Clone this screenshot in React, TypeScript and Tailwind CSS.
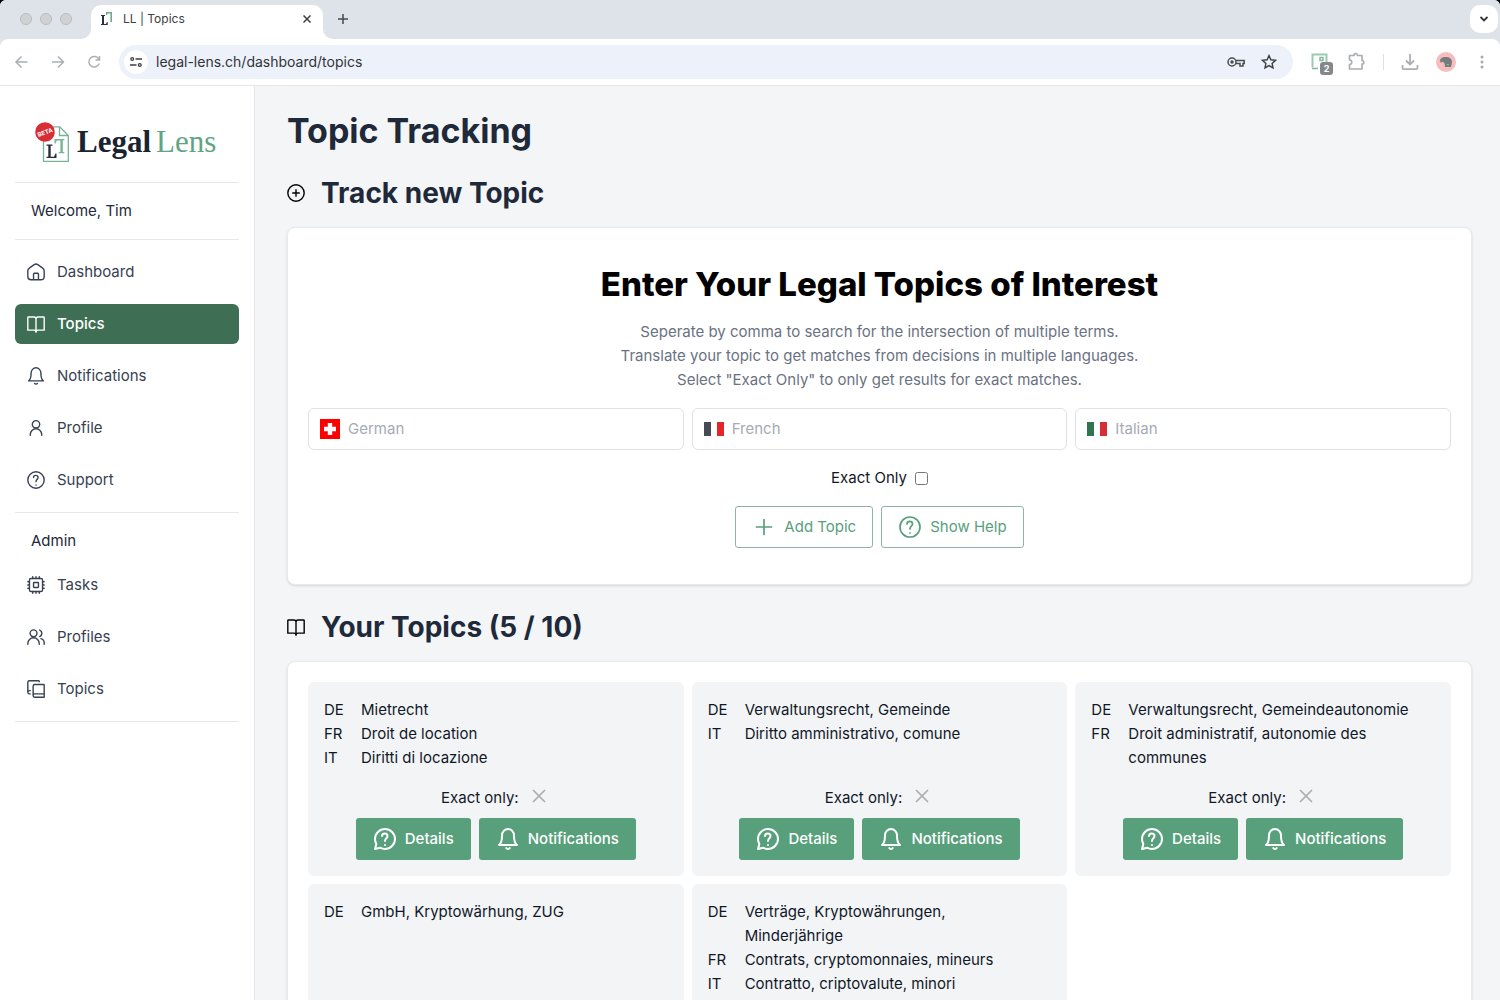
import type { ReactNode } from 'react'

type IconProps = { className?: string; viewBox?: string }

function LineIcon({
  className = 'size-[18px]',
  viewBox = '1 1 22 22',
  children,
}: IconProps & { children: ReactNode }) {
  return (
    <svg
      className={`shrink-0 ${className}`}
      viewBox={viewBox}
      fill="none"
      stroke="currentColor"
      strokeWidth="1.7"
      strokeLinecap="round"
      strokeLinejoin="round"
      aria-hidden="true"
    >
      {children}
    </svg>
  )
}

function IconHome() {
  return (
    <LineIcon>
      <path d="M9 21.500H6a4 4 0 0 1-4-4v-7a4 4 0 0 1 1.800-3.300l6-4.200a4 4 0 0 1 4.400 0l6 4.200a4 4 0 0 1 1.800 3.300v7a4 4 0 0 1-4 4h-3M9 21.500v-7a1 1 0 0 1 1-1h4a1 1 0 0 1 1 1v7M9 21.500h6" />
    </LineIcon>
  )
}

function IconBook() {
  return (
    <LineIcon>
      <path d="M12 22V6a2.500 2.500 0 0 1 2.500-2.500h6.900a.6.6 0 0 1 .6.6V19.500h-7.500A2.500 2.500 0 0 0 12 22M12 22V6a2.500 2.500 0 0 0-2.500-2.500H2.600a.6.6 0 0 0-.6.6V19.500h7.500A2.500 2.500 0 0 1 12 22" />
    </LineIcon>
  )
}

function IconBell({ className, viewBox }: IconProps) {
  return (
    <LineIcon className={className} viewBox={viewBox}>
      <path d="M18 8.400C18 6.703 17.368 5.075 16.243 3.875 15.117 2.674 13.591 2 12 2s-3.117.674-4.243 1.875C6.632 5.075 6 6.703 6 8.400 6 15.867 3 18 3 18h18s-3-2.133-3-9.600Z" />
      <path d="M13.730 21a2 2 0 0 1-3.460 0" />
    </LineIcon>
  )
}

function IconUser() {
  return (
    <LineIcon>
      <path d="M5 21v-1a7 7 0 0 1 14 0v1" />
      <circle cx="12" cy="7.500" r="4.500" />
    </LineIcon>
  )
}

function IconHelp({ className, viewBox }: IconProps) {
  return (
    <LineIcon className={className} viewBox={viewBox}>
      <circle cx="12" cy="12" r="10" />
      <path d="M9 9c0-3.500 5.500-3.500 5.500 0 0 2.500-2.500 2-2.500 5M12 18.010l.01-.011" />
    </LineIcon>
  )
}

function IconCpu() {
  return (
    <LineIcon>
      <rect x="4" y="4" width="16" height="16" rx="2" />
      <rect x="9" y="9" width="6" height="6" rx="0.5" />
      <path d="M8 4V2M12 4V2M16 4V2M8 22v-2M12 22v-2M16 22v-2M4 8H2M4 12H2M4 16H2M22 8h-2M22 12h-2M22 16h-2" />
    </LineIcon>
  )
}

function IconUsers() {
  return (
    <LineIcon>
      <path d="M2 21v-1a7 7 0 0 1 14 0v1M18 14a5.500 5.500 0 0 1 4 5.500V21" />
      <circle cx="9" cy="7.500" r="4.200" />
      <path d="M16.500 3.500a4.300 4.300 0 0 1 0 8" />
    </LineIcon>
  )
}

function IconBooks() {
  return (
    <LineIcon>
      <path d="M5 18H4a2 2 0 0 1-2-2V4a2 2 0 0 1 2-2h11.400a.6.6 0 0 1 .6.6V3M2 15.500A2 2 0 0 1 4 14h1" />
      <path d="M8.500 20V8.500a2 2 0 0 1 2-2h10.900a.6.6 0 0 1 .6.6V18H10.500a2 2 0 0 0 0 4H22v-4" />
    </LineIcon>
  )
}

function IconPlusCircle() {
  return (
    <LineIcon>
      <circle cx="12" cy="12" r="10" />
      <path d="M8 12h8M12 8v8" />
    </LineIcon>
  )
}

function IconChatQuestion() {
  return (
    <LineIcon className="size-6 stroke-2" viewBox="0 0 24 24">
      <path d="M12 22C17.523 22 22 17.523 22 12S17.523 2 12 2 2 6.477 2 12c0 1.821.487 3.529 1.338 5L2 22l5-1.338C8.471 21.513 10.179 22 12 22Z" />
      <path d="M9 9c0-3.500 5.500-3.500 5.500 0 0 2.500-2.500 2-2.500 5M12 18.010l.01-.011" />
    </LineIcon>
  )
}

function Favicon() {
  return (
    <svg className="size-4 shrink-0" viewBox="0 0 16 16" aria-hidden="true">
      <path d="M2 4h4v1H5v8h2l1-2h.7v3H2v-1h1V5H2z" fill="#27303c" />
      <path d="M7 1h6v10h-1.600V2.400H8.500L8 4H7z" fill="#6bab8c" />
    </svg>
  )
}

function TabStrip() {
  return (
    <div className="flex h-[39px] shrink-0 items-center bg-[#dee2e9] pb-px pl-5">
      <div className="flex gap-2">
        {['close', 'minimize', 'zoom'].map((name) => (
          <button
            key={name}
            type="button"
            aria-label={name}
            className="size-3 rounded-full border border-[#b9bcbe] bg-[#cfd1d3]"
          />
        ))}
      </div>
      <div className="relative -mb-px ml-[19px] flex h-[34px] w-[232px] items-center gap-2 self-end rounded-t-[10px] bg-white px-2 pb-1.5 text-[#3c4043]">
        <svg className="absolute bottom-0 right-full size-2.5" viewBox="0 0 10 10" aria-hidden="true">
          <path d="M10 0v10H0A10 10 0 0 0 10 0Z" fill="#fff" />
        </svg>
        <svg className="absolute bottom-0 left-full size-2.5" viewBox="0 0 10 10" aria-hidden="true">
          <path d="M0 0v10h10A10 10 0 0 1 0 0Z" fill="#fff" />
        </svg>
        <Favicon />
        <span className="flex-1 text-xs">LL | Topics</span>
        <button type="button" aria-label="Close tab" className="flex size-4 items-center justify-center">
          <svg className="size-2" viewBox="0 0 8 8" stroke="#3c4043" strokeWidth="1.500" aria-hidden="true">
            <path d="M.5.5l7 7M7.500.5l-7 7" />
          </svg>
        </button>
      </div>
      <button type="button" aria-label="New tab" className="ml-3 flex size-4 items-center justify-center">
        <svg className="size-2.5" viewBox="0 0 10 10" stroke="#45494d" strokeWidth="1.500" aria-hidden="true">
          <path d="M5 0v10M0 5h10" />
        </svg>
      </button>
      <button
        type="button"
        aria-label="Search tabs"
        className="ml-auto mr-0.5 flex size-7 items-center justify-center rounded-[10px] bg-white"
      >
        <svg className="h-1.5 w-2" viewBox="0 0 8 6" fill="none" stroke="#303438" strokeWidth="1.800" aria-hidden="true">
          <path d="M.5 1L4 4.500 7.500 1" />
        </svg>
      </button>
    </div>
  )
}

function Toolbar() {
  return (
    <div className="bg-[#dee2e9]">
      <div className="flex h-[47px] items-center rounded-t-[8px] border-b border-[#e4e6e9] bg-white px-3 text-[#abafb3]">
        <div className="flex items-center gap-4">
          <button type="button" aria-label="Back" className="size-5">
            <svg viewBox="0 0 20 20" fill="none" stroke="currentColor" strokeWidth="1.500" aria-hidden="true">
              <path d="M15.500 10H4M9.500 4.500L4 10l5.500 5.500" />
            </svg>
          </button>
          <button type="button" aria-label="Forward" className="size-5">
            <svg viewBox="0 0 20 20" fill="none" stroke="currentColor" strokeWidth="1.500" aria-hidden="true">
              <path d="M4 10h11.500M10 4.500l5.500 5.500-5.500 5.500" />
            </svg>
          </button>
          <button type="button" aria-label="Reload" className="size-5">
            <svg viewBox="0 0 20 20" fill="none" stroke="currentColor" strokeWidth="1.500" aria-hidden="true">
              <path d="M15 7.500A5.300 5.300 0 1 0 15.200 11.500M15.500 4v4h-4" />
            </svg>
          </button>
        </div>
        <div className="ml-[15px] flex h-[34px] flex-1 items-center rounded-full bg-[#edf1fa] pl-[5px] pr-4">
          <span className="flex size-6 items-center justify-center rounded-full bg-white">
            <svg className="size-3" viewBox="0 0 12 12" fill="none" stroke="#3c4043" strokeWidth="1.300" aria-hidden="true">
              <circle cx="2.200" cy="3" r="1.400" />
              <path d="M5.500 3H12M0 9h6.500" />
              <circle cx="9.800" cy="9" r="1.400" />
            </svg>
          </span>
          <input
            aria-label="Address"
            defaultValue="legal-lens.ch/dashboard/topics"
            className="ml-2 min-w-0 flex-1 bg-transparent text-sm text-[#303438] outline-none"
          />
          <svg className="h-3 w-[18px]" viewBox="0 0 18 12" fill="none" stroke="#4a4d51" strokeWidth="1.500" aria-hidden="true">
            <circle cx="5" cy="6" r="4" />
            <circle cx="5" cy="6" r="1" fill="#4a4d51" />
            <path d="M8.800 4.500h8.400v3h-1.200v2.500h-3V7.500H8.800" />
          </svg>
          <svg className="ml-4 size-4" viewBox="0 0 16 16" fill="none" stroke="#3c4043" strokeWidth="1.400" aria-hidden="true">
            <path d="M8 1.600l1.900 4.200 4.600.5-3.400 3.100.9 4.500-4-2.300-4 2.300.9-4.500L1.500 6.300l4.600-.5z" />
          </svg>
        </div>
        <div className="ml-[18px] flex items-center">
          <span className="relative block size-5">
            <svg className="size-5" viewBox="0 0 20 20" aria-hidden="true">
              <path d="M1.500 15.500V2.500h14v8" fill="none" stroke="#9cc9b3" strokeWidth="2" />
              <path d="M1 16.500h6M9 5.500h3v3h-3z" stroke="#84b99d" fill="none" strokeWidth="1.500" />
            </svg>
            <span className="absolute left-[9px] top-[10px] flex size-[13px] items-center justify-center rounded-[3px] bg-[#84888c] text-[9px] font-bold text-white">
              2
            </span>
          </span>
          <svg className="ml-4 size-5" viewBox="0 0 20 20" fill="none" stroke="currentColor" strokeWidth="1.700" aria-hidden="true">
            <path d="M2.500 3.500H7a1.800 1.800 0 0 1 3.600 0H15v5a1.800 1.800 0 0 1 0 3.600v4.900H2.500v-4.500a2.200 2.200 0 0 0 0-4.500z" strokeLinejoin="round" />
          </svg>
          <span className="ml-4 h-4 w-px bg-[#dcdfe3]" />
          <svg className="ml-[17px] size-[18px]" viewBox="0 0 18 18" fill="none" stroke="currentColor" strokeWidth="1.800" aria-hidden="true">
            <path d="M9 1v10M5 7.500l4 4 4-4M1.500 12v3a1.200 1.200 0 0 0 1.200 1.200h12.600a1.200 1.200 0 0 0 1.200-1.200v-3" />
          </svg>
          <svg className="ml-[17px] size-5" viewBox="0 0 20 20" aria-hidden="true">
            <circle cx="10" cy="10" r="10" fill="#f7bcbe" />
            <path d="M4 9c0-3 3-4.500 6-4 3.500 0 6 2 6 5l-1 5h-2l-.5-3-1.500.5V15H9l-.5-4L6 9.500 5 11z" fill="#737b7d" />
            <path d="M10 8l2 1-1 2zM11 13h3v2h-3z" fill="#4f9277" />
          </svg>
          <svg className="ml-[18px] h-4 w-3.5" viewBox="0 0 14 16" fill="#a6aaae" aria-hidden="true">
            <circle cx="8" cy="3" r="1.500" />
            <circle cx="8" cy="8" r="1.500" />
            <circle cx="8" cy="13" r="1.500" />
          </svg>
        </div>
      </div>
    </div>
  )
}

function Logo() {
  return (
    <a href="#" className="flex h-24 items-center gap-1.5 pl-5 pt-4">
      <svg className="h-10 w-9 shrink-0" viewBox="0 0 36 40" aria-hidden="true">
        <path d="M8.500 18v21.300h24.800V13.500l-8.500-8.700H17M24.500 5v8.500h8.800" fill="none" stroke="#77b396" strokeWidth="1.300" />
        <path d="M11.500 22.500h6v1.200h-1.800v11h3.300l1.500-3.200h1v4.500h-10v-1.300h1.800v-11h-1.800z" fill="#27303c" />
        <path d="M19.500 17h9.800v1.300h-1.500V30h1.500v1.200h-5.500V30h1.600V18.500h-3.600l-1.200 3h-1.100z" fill="#77b396" />
        <circle cx="10" cy="10" r="9.800" fill="#d92d36" />
        <text
          x="10"
          y="12.500"
          textAnchor="middle"
          transform="rotate(-20 10 10)"
          fontSize="6"
          fontWeight="700"
          fill="#fff"
        >
          BETA
        </text>
      </svg>
      <span className="flex gap-[5px] pb-0.5 font-['Liberation_Serif',serif] text-[31px] leading-none">
        <span className="font-bold text-[#1b2330]">Legal</span>
        <span className="text-[#5fa583]">Lens</span>
      </span>
    </a>
  )
}

function NavItem({ icon, label, active = false }: { icon: ReactNode; label: string; active?: boolean }) {
  return (
    <a
      href="#"
      aria-current={active ? 'page' : undefined}
      className={`flex h-10 items-center gap-3 rounded-md px-3 ${
        active ? 'bg-[#3e6f55] font-medium text-white' : 'text-[#374151]'
      }`}
    >
      {icon}
      {label}
    </a>
  )
}

function Sidebar() {
  return (
    <aside className="w-[255px] shrink-0 border-r border-gray-200 bg-white px-[15px] text-gray-800">
      <Logo />
      <p className="border-y border-gray-200 px-4 py-4">Welcome, Tim</p>
      <nav className="flex flex-col gap-3 border-b border-gray-200 py-3">
        <NavItem icon={<IconHome />} label="Dashboard" />
        <NavItem icon={<IconBook />} label="Topics" active />
        <NavItem icon={<IconBell />} label="Notifications" />
        <NavItem icon={<IconUser />} label="Profile" />
        <NavItem icon={<IconHelp />} label="Support" />
      </nav>
      <p className="px-4 pt-4">Admin</p>
      <nav className="flex flex-col gap-3 border-b border-gray-200 py-3">
        <NavItem icon={<IconCpu />} label="Tasks" />
        <NavItem icon={<IconUsers />} label="Profiles" />
        <NavItem icon={<IconBooks />} label="Topics" />
      </nav>
    </aside>
  )
}

function SwissFlag() {
  return (
    <svg className="size-5 shrink-0" viewBox="0 0 20 20" aria-hidden="true">
      <path d="M0 0h20v20H0z" fill="#ff0000" />
      <path d="M7.800 4h4.400v3.800H16v4.400h-3.800V16H7.800v-3.800H4V7.800h3.800z" fill="#fff" />
    </svg>
  )
}

function FrenchFlag() {
  return (
    <svg className="h-3.5 w-5 shrink-0" viewBox="0 0 20 14" aria-hidden="true">
      <path d="M0 0h7v14H0z" fill="#454a54" />
      <path d="M13 0h7v14h-7z" fill="#e5252c" />
    </svg>
  )
}

function ItalianFlag() {
  return (
    <svg className="h-3.5 w-5 shrink-0" viewBox="0 0 20 14" aria-hidden="true">
      <path d="M0 0h7v14H0z" fill="#2f7552" />
      <path d="M13 0h7v14h-7z" fill="#d62e36" />
    </svg>
  )
}

function LanguageInput({ flag, language }: { flag: ReactNode; language: string }) {
  return (
    <label className="flex h-[42px] items-center gap-2 rounded-md border border-[#dfe2e5] bg-white px-[11px]">
      {flag}
      <input
        type="text"
        aria-label={language}
        placeholder={language}
        className="min-w-0 flex-1 bg-transparent outline-none placeholder:text-[#a5abb3]"
      />
    </label>
  )
}

function OutlineButton({ icon, children }: { icon: ReactNode; children: ReactNode }) {
  return (
    <button
      type="button"
      className="flex h-[42px] items-center gap-2 rounded-[3px] border border-[#8fb5a2] px-4 text-[#57a07b]"
    >
      {icon}
      {children}
    </button>
  )
}

function SolidButton({ icon, children }: { icon: ReactNode; children: ReactNode }) {
  return (
    <button
      type="button"
      className="flex h-[42px] items-center gap-2 rounded-[3px] bg-[#57a07b] px-[17px] font-medium text-white"
    >
      {icon}
      {children}
    </button>
  )
}

function TopicForm() {
  return (
    <section className="mt-4 rounded-lg border border-[#e8eaed] bg-white px-5 py-9 shadow-sm">
      <h3 className="text-center text-[33px] font-extrabold leading-10 text-black">
        Enter Your Legal Topics of Interest
      </h3>
      <p className="mt-4 text-center text-gray-500">
        Seperate by comma to search for the intersection of multiple terms.
        <br />
        Translate your topic to get matches from decisions in multiple languages.
        <br />
        Select "Exact Only" to only get results for exact matches.
      </p>
      <div className="mt-4 grid grid-cols-3 gap-2">
        <LanguageInput flag={<SwissFlag />} language="German" />
        <LanguageInput flag={<FrenchFlag />} language="French" />
        <LanguageInput flag={<ItalianFlag />} language="Italian" />
      </div>
      <label className="mt-4 flex items-center justify-center gap-2 text-gray-900">
        Exact Only
        <input type="checkbox" className="size-[13px]" />
      </label>
      <div className="mt-4 flex justify-center gap-2">
        <OutlineButton
          icon={
            <LineIcon className="size-6" viewBox="0 0 24 24">
              <path d="M4.500 12h15M12 4.500v15" />
            </LineIcon>
          }
        >
          Add Topic
        </OutlineButton>
        <OutlineButton icon={<IconHelp className="size-6" viewBox="0 0 24 24" />}>Show Help</OutlineButton>
      </div>
    </section>
  )
}

type Topic = { lang: string; term: string }[]

const TOPICS: Topic[] = [
  [
    { lang: 'DE', term: 'Mietrecht' },
    { lang: 'FR', term: 'Droit de location' },
    { lang: 'IT', term: 'Diritti di locazione' },
  ],
  [
    { lang: 'DE', term: 'Verwaltungsrecht, Gemeinde' },
    { lang: 'IT', term: 'Diritto amministrativo, comune' },
  ],
  [
    { lang: 'DE', term: 'Verwaltungsrecht, Gemeindeautonomie' },
    { lang: 'FR', term: 'Droit administratif, autonomie des communes' },
  ],
  [{ lang: 'DE', term: 'GmbH, Kryptowärhung, ZUG' }],
  [
    { lang: 'DE', term: 'Verträge, Kryptowährungen, Minderjährige' },
    { lang: 'FR', term: 'Contrats, cryptomonnaies, mineurs' },
    { lang: 'IT', term: 'Contratto, criptovalute, minori' },
  ],
]

function TopicCard({ topic }: { topic: Topic }) {
  return (
    <article className="flex flex-col rounded-md bg-gray-100 p-4 text-gray-900">
      <dl>
        {topic.map(({ lang, term }) => (
          <div key={lang} className="flex pr-4">
            <dt className="w-[37px] shrink-0">{lang}</dt>
            <dd>{term}</dd>
          </div>
        ))}
      </dl>
      <div className="mt-auto flex items-start justify-center gap-2 pt-4">
        Exact only:
        <span className="flex h-5 w-6 items-center justify-center text-[#a9adb2]">
          <LineIcon className="size-6" viewBox="0 0 24 24">
            <path d="M6.500 17.500l11-11M6.500 6.500l11 11" />
          </LineIcon>
        </span>
      </div>
      <div className="mt-2 flex justify-center gap-2">
        <SolidButton icon={<IconChatQuestion />}>Details</SolidButton>
        <SolidButton icon={<IconBell className="size-6 stroke-2" viewBox="0 0 24 24" />}>Notifications</SolidButton>
      </div>
    </article>
  )
}

function SectionTitle({ icon, children }: { icon: ReactNode; children: ReactNode }) {
  return (
    <div className="mt-6 flex items-center gap-4">
      {icon}
      <h2 className="text-[28px] font-bold leading-9 text-gray-800">{children}</h2>
    </div>
  )
}

export default function App() {
  return (
    <div className="bg-black">
      <div className="flex h-screen flex-col overflow-hidden rounded-t-[6px] bg-white font-[Inter,'Liberation_Sans',sans-serif] text-[15px] leading-6">
        <TabStrip />
        <Toolbar />
        <div className="flex min-h-0 flex-1">
          <Sidebar />
          <main className="min-w-0 flex-1 overflow-y-auto bg-[#f4f5f7] pl-8 pr-7 pt-[25px] [scrollbar-width:none]">
            <h1 className="text-[34px] font-bold leading-10 text-gray-800">Topic Tracking</h1>
            <SectionTitle icon={<IconPlusCircle />}>Track new Topic</SectionTitle>
            <TopicForm />
            <SectionTitle icon={<IconBook />}>Your Topics (5 / 10)</SectionTitle>
            <section className="mt-4 grid grid-cols-3 gap-2 rounded-lg border border-[#e8eaed] bg-white p-5 shadow-sm">
              {TOPICS.map((topic) => (
                <TopicCard key={topic[0].term} topic={topic} />
              ))}
            </section>
          </main>
        </div>
      </div>
    </div>
  )
}
